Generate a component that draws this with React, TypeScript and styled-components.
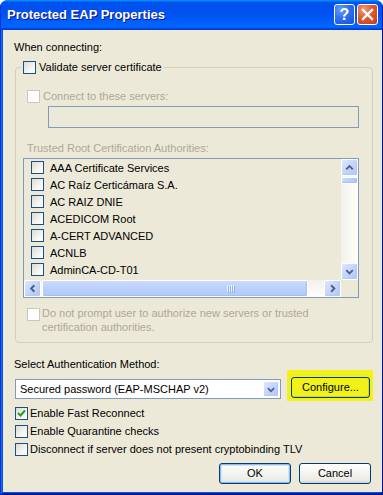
import React from 'react';
import styled, { createGlobalStyle, css } from 'styled-components';

const Global = createGlobalStyle`
  html, body { margin: 0; padding: 0; background: #ffffff; }
  body { font-family: "Liberation Sans", Arial, sans-serif; font-size: 11px; color: #000; }
  * { box-sizing: border-box; }
`;

const Window = styled.div`
  width: 383px;
  height: 495px;
  display: flex;
  flex-direction: column;
  border-radius: 8px 8px 0 0;
  overflow: hidden;
  background: #0855dd;
`;

const TitleBar = styled.div`
  height: 30px;
  flex: none;
  display: flex;
  align-items: center;
  padding: 0 5px 0 7px;
  background: linear-gradient(180deg, #0997ff 0%, #0053ee 8%, #0050ee 40%, #0066ff 88%, #0066ff 90%, #005bff 93%, #003dd7 96%, #003dd7 100%);
  box-shadow: inset 1px 0 #0831d9, inset -1px 0 #001ea0;
`;

const Title = styled.div`
  flex: 1;
  color: #ffffff;
  font-weight: bold;
  font-size: 13px;
  text-shadow: 1px 1px #0f1089;
  margin-top: -1px;
`;

const CaptionButtons = styled.div`
  display: flex;
  gap: 2px;
  margin-top: -1px;
`;

const CaptionButton = styled.div<{ $kind: 'help' | 'close' }>`
  width: 21px;
  height: 21px;
  border: 1px solid #ffffff;
  border-radius: 3px;
  display: flex;
  align-items: center;
  justify-content: center;
  color: #ffffff;
  font-weight: bold;
  font-size: 16px;
  ${(p) =>
    p.$kind === 'help'
      ? css`
          background: radial-gradient(circle at 30% 25%, #6a9bf8 0%, #2f6ef0 45%, #1650dc 100%);
        `
      : css`
          background: radial-gradient(circle at 30% 25%, #f19b7a 0%, #e2582e 45%, #c33c14 100%);
        `}
`;

const Frame = styled.div`
  flex: 1;
  display: flex;
  padding: 0 3px 3px 3px;
  background: #0855dd;
  box-shadow: inset 1px 0 #0831d9, inset -1px 0 #00138c, inset 0 -1px #00138c,
    inset 2px 0 #166aee, inset -2px 0 #001ea0, inset 0 -2px #001ea0;
`;

const Body = styled.div`
  flex: 1;
  background: #ece9d8;
  display: flex;
  flex-direction: column;
  padding: 11px 9px 0 11px;
`;

const Text = styled.div<{ $disabled?: boolean }>`
  line-height: 13px;
  color: ${(p) => (p.$disabled ? '#aca899' : '#000000')};
  white-space: nowrap;
`;

const Group = styled.fieldset`
  margin: 7px 0 0 1px;
  padding: 0 13px 8px 7px;
  border: 1px solid #d0d0bf;
  border-radius: 4px;
  min-width: 0;
`;

const Legend = styled.legend`
  padding: 0 2px;
  margin-left: -2px;
  display: flex;
  align-items: center;
  gap: 3px;
  line-height: 13px;
`;

const Row = styled.div<{ $top?: number; $gap?: number; $indent?: number }>`
  display: flex;
  align-items: center;
  gap: ${(p) => p.$gap ?? 2}px;
  margin-top: ${(p) => p.$top ?? 0}px;
  padding-left: ${(p) => p.$indent ?? 0}px;
  line-height: 13px;
`;

const WrapRow = styled.div`
  display: flex;
  align-items: flex-start;
  gap: 2px;
  margin-top: 8px;
  padding-left: 4px;
`;

const WrapText = styled.div`
  line-height: 14px;
  color: #aca899;
`;

const Box = styled.span<{ $disabled?: boolean; $top?: number }>`
  flex: none;
  width: 13px;
  height: 13px;
  display: inline-flex;
  align-items: center;
  justify-content: center;
  margin-top: ${(p) => p.$top ?? 0}px;
  border: 1px solid ${(p) => (p.$disabled ? '#cac8bb' : '#1c5180')};
  background: ${(p) =>
    p.$disabled ? '#ffffff' : 'linear-gradient(135deg, #dcdcd7 0%, #f4f4f0 60%, #ffffff 100%)'};
`;

const Input = styled.div`
  margin: 3px 0 0 25px;
  height: 22px;
  border: 1px solid #7f9db9;
  background: #ece9d8;
`;

const ListBox = styled.div`
  margin-top: 3px;
  height: 140px;
  border: 1px solid #7f9db9;
  background: #ece9d8;
  display: grid;
  grid-template-columns: 1fr 17px;
  grid-template-rows: 1fr 17px;
  overflow: hidden;
`;

const Items = styled.div`
  overflow: hidden;
`;

const Item = styled.div`
  height: 17px;
  display: flex;
  align-items: center;
  gap: 6px;
  padding-left: 7px;
  white-space: nowrap;
`;

const VScroll = styled.div`
  display: flex;
  flex-direction: column;
  background: linear-gradient(90deg, #f3f1ec 0%, #fefefb 100%);
`;

const HScroll = styled.div`
  display: flex;
  background: linear-gradient(180deg, #f3f1ec 0%, #fefefb 100%);
`;

const Corner = styled.div`
  background: #ece9d8;
`;

const ScrollButton = styled.div`
  width: 17px;
  height: 17px;
  flex: none;
  border: 1px solid #ffffff;
  border-radius: 2px;
  background: linear-gradient(135deg, #dde7fe 0%, #c2d3fc 55%, #b1c6f6 100%);
  box-shadow: inset -1px -1px #b4c8f6;
  display: flex;
  align-items: center;
  justify-content: center;
`;

const Thumb = styled.div<{ $horizontal?: boolean }>`
  flex: none;
  border: 1px solid #ffffff;
  border-radius: 2px;
  background: ${(p) =>
    p.$horizontal
      ? 'linear-gradient(180deg, #cbdafc 0%, #bccffb 50%, #b3c8f5 100%)'
      : 'linear-gradient(90deg, #cbdafc 0%, #bccffb 50%, #b3c8f5 100%)'};
  box-shadow: inset -1px -1px #a8bdef;
  display: flex;
  align-items: center;
  justify-content: center;
  ${(p) =>
    p.$horizontal
      ? css`
          width: 266px;
          height: 17px;
          margin-left: 1px;
        `
      : css`
          height: 7px;
          width: 17px;
          margin-top: 1px;
        `}
`;

const Grip = styled.div`
  display: flex;
  gap: 1px;
  margin-left: 110px;
  span {
    width: 1px;
    height: 7px;
    background: #eef4fe;
    box-shadow: 1px 1px #8cb0f8;
  }
`;

const Spacer = styled.div`
  flex: 1;
`;

const SelectRow = styled.div`
  display: flex;
  align-items: flex-start;
  margin-top: -1px;
`;

const Select = styled.div`
  margin: 9px 0 0 1px;
  width: 266px;
  height: 20px;
  border: 1px solid #7f9db9;
  background: #ffffff;
  display: flex;
  align-items: center;
  padding: 1px;
`;

const SelectValue = styled.div`
  flex: 1;
  padding-left: 3px;
  line-height: 13px;
  white-space: nowrap;
`;

const DropButton = styled.div`
  width: 16px;
  height: 16px;
  border: 1px solid #ffffff;
  border-radius: 2px;
  background: linear-gradient(135deg, #dde7fe 0%, #c2d3fc 55%, #b1c6f6 100%);
  box-shadow: inset -1px -1px #b4c8f6;
  display: flex;
  align-items: center;
  justify-content: center;
`;

const Highlight = styled.div`
  margin-left: 6px;
  width: 86px;
  height: 31px;
  background: #f2f21a;
  padding: 7px 0 0 4px;
`;

const Button = styled.div<{ $default?: boolean; $yellow?: boolean }>`
  height: 21px;
  width: ${(p) => (p.$yellow ? 79 : 72)}px;
  border: 1px solid #003c74;
  border-radius: 3px;
  display: flex;
  align-items: center;
  justify-content: center;
  line-height: 13px;
  ${(p) =>
    p.$yellow
      ? css`
          background: #f2f21a;
          box-shadow: inset -1px -1px #d8d80e;
        `
      : css`
          background: linear-gradient(180deg, #ffffff 0%, #f3f3ef 50%, #ecebe6 86%, #d6d0c5 100%);
        `}
  ${(p) =>
    p.$default &&
    css`
      box-shadow: inset 0 0 0 1px #98b8ea, inset 0 0 0 2px #cee7ff;
    `}
`;

const Checks = styled.div`
  display: flex;
  flex-direction: column;
  gap: 5px;
  margin-top: 6px;
  padding-left: 1px;
`;

const Buttons = styled.div`
  display: flex;
  justify-content: flex-end;
  gap: 8px;
  margin: 7px 2px 0 0;
`;

const Arrow = ({ dir }: { dir: 'up' | 'down' | 'left' | 'right' }) => {
  const d = {
    up: 'M4.5 10 L8 6.5 L11.5 10',
    down: 'M4.5 6.5 L8 10 L11.5 6.5',
    left: 'M10 4.5 L6.5 8 L10 11.5',
    right: 'M6.5 4.5 L10 8 L6.5 11.5',
  }[dir];
  return (
    <svg width="15" height="15" viewBox="0 0 16 16">
      <path d={d} fill="none" stroke="#4d6185" strokeWidth="2" />
    </svg>
  );
};

const Check = () => (
  <svg width="9" height="9" viewBox="0 0 9 9">
    <path d="M1 4 L3.5 6.5 L8 1.5" fill="none" stroke="#21a121" strokeWidth="2" />
  </svg>
);

const certs = [
  'AAA Certificate Services',
  'AC Raíz Certicámara S.A.',
  'AC RAIZ DNIE',
  'ACEDICOM Root',
  'A-CERT ADVANCED',
  'ACNLB',
  'AdminCA-CD-T01',
];

export default function App() {
  return (
    <>
      <Global />
      <Window>
        <TitleBar>
          <Title>Protected EAP Properties</Title>
          <CaptionButtons>
            <CaptionButton $kind="help">?</CaptionButton>
            <CaptionButton $kind="close">
              <svg width="13" height="13" viewBox="0 0 13 13">
                <path d="M2 2 L11 11 M11 2 L2 11" stroke="#ffffff" strokeWidth="2.4" strokeLinecap="square" />
              </svg>
            </CaptionButton>
          </CaptionButtons>
        </TitleBar>
        <Frame>
          <Body>
            <Text>When connecting:</Text>
            <Group>
              <Legend>
                <Box />
                <span>Validate server certificate</span>
              </Legend>
              <Row $top={16} $indent={4} $gap={3}>
                <Box $disabled />
                <Text $disabled>Connect to these servers:</Text>
              </Row>
              <Input />
              <Row $top={14} $indent={4}>
                <Text $disabled>Trusted Root Certification Authorities:</Text>
              </Row>
              <ListBox>
                <Items>
                  {certs.map((c) => (
                    <Item key={c}>
                      <Box />
                      <span>{c}</span>
                    </Item>
                  ))}
                </Items>
                <VScroll>
                  <ScrollButton>
                    <Arrow dir="up" />
                  </ScrollButton>
                  <Thumb />
                  <Spacer />
                  <ScrollButton>
                    <Arrow dir="down" />
                  </ScrollButton>
                </VScroll>
                <HScroll>
                  <ScrollButton>
                    <Arrow dir="left" />
                  </ScrollButton>
                  <Thumb $horizontal>
                    <Grip>
                      <span />
                      <span />
                      <span />
                      <span />
                    </Grip>
                  </Thumb>
                  <Spacer />
                  <ScrollButton>
                    <Arrow dir="right" />
                  </ScrollButton>
                </HScroll>
                <Corner />
              </ListBox>
              <WrapRow>
                <Box $disabled $top={2} />
                <WrapText>
                  Do not prompt user to authorize new servers or trusted
                  <br />
                  certification authorities.
                </WrapText>
              </WrapRow>
            </Group>
            <Row $top={15}>
              <Text>Select Authentication Method:</Text>
            </Row>
            <SelectRow>
              <Select>
                <SelectValue>Secured password (EAP-MSCHAP v2)</SelectValue>
                <DropButton>
                  <Arrow dir="down" />
                </DropButton>
              </Select>
              <Highlight>
                <Button $yellow>Configure...</Button>
              </Highlight>
            </SelectRow>
            <Checks>
              <Row>
                <Box>
                  <Check />
                </Box>
                <Text>Enable Fast Reconnect</Text>
              </Row>
              <Row>
                <Box />
                <Text>Enable Quarantine checks</Text>
              </Row>
              <Row>
                <Box />
                <Text>Disconnect if server does not present cryptobinding TLV</Text>
              </Row>
            </Checks>
            <Buttons>
              <Button $default>OK</Button>
              <Button>Cancel</Button>
            </Buttons>
          </Body>
        </Frame>
      </Window>
    </>
  );
}
